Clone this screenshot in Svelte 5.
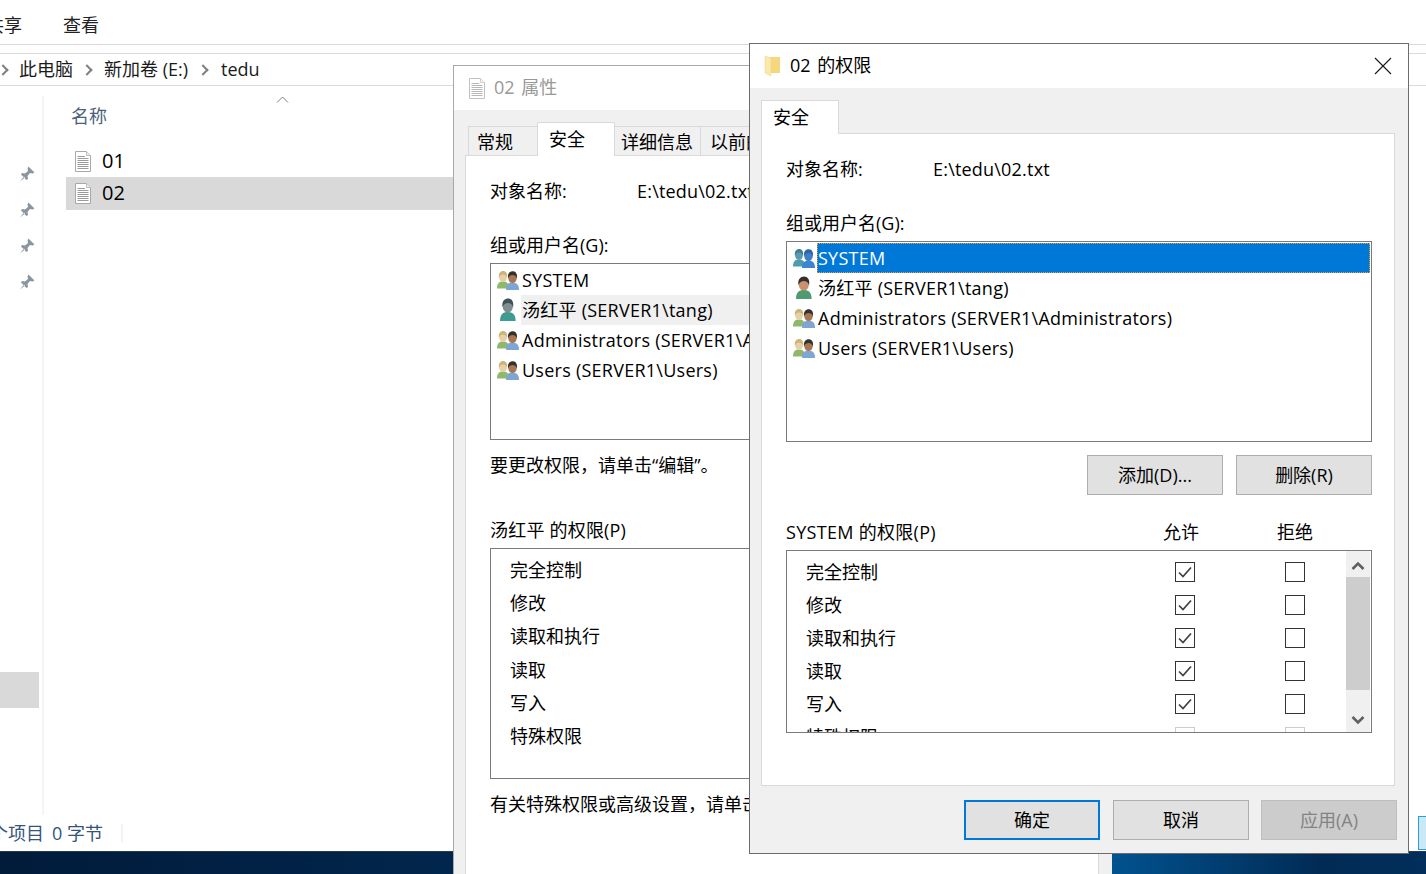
<script>
  const perms = ['完全控制', '修改', '读取和执行', '读取', '写入', '特殊权限'];
  const backUsers = [
    { name: 'SYSTEM', icon: 'group' },
    { name: '汤红平 (SERVER1\\tang)', icon: 'faded', hover: true },
    { name: 'Administrators (SERVER1\\Administrators)', icon: 'group' },
    { name: 'Users (SERVER1\\Users)', icon: 'group' }
  ];
  const frontUsers = [
    { name: 'SYSTEM', icon: 'system', selected: true },
    { name: '汤红平 (SERVER1\\tang)', icon: 'user' },
    { name: 'Administrators (SERVER1\\Administrators)', icon: 'group' },
    { name: 'Users (SERVER1\\Users)', icon: 'group' }
  ];
  const pins = [1, 2, 3, 4];
</script>

{#snippet doc(cls)}
  <svg class={cls} width="18" height="23" viewBox="0 0 18 23">
    <path d="M1.5 1.5H12.5L16.5 5.5V21.5H1.5Z" fill="#fff" stroke="#a8a8a8" />
    <path d="M12.5 1.5V5.5H16.5" fill="#f0f0f0" stroke="#bdbdbd" />
    <path d="M3.5 6.5H11M3.5 8.5H14.5M3.5 10.5H14.5M3.5 12.5H14.5M3.5 14.5H14.5M3.5 16.5H14.5M3.5 18.5H14.5" stroke="#9a9a9a" />
  </svg>
{/snippet}

{#snippet person(x, y, scale, hair, skin, shirt)}
  <g transform="translate({x} {y}) scale({scale})">
    <path d="M0 20C0 14.500 2.500 12.500 6.500 12.500S13 14.500 13 20Z" fill={shirt} />
    <ellipse cx="6.500" cy="7.500" rx="4.300" ry="5.500" fill={skin} />
    <path d="M2.100 8.500C1.300 3.500 3.800 1.200 6.700 1.200S11.700 3.500 10.900 8.500C10.200 5.800 8.400 5 6.500 5S2.900 5.800 2.100 8.500Z" fill={hair} />
  </g>
{/snippet}

{#snippet usericon(kind)}
  <svg class="uicon" width="22" height="20" viewBox="0 0 22 20">
    {#if kind === 'group'}
      {@render person(0, 0, 0.92, '#c9b578', '#e8cfa8', '#8fb86c')}
      {@render person(9, 0, 1, '#33302e', '#a87650', '#7ea6d2')}
    {:else if kind === 'system'}
      {@render person(0, 0, 0.92, '#3d7f96', '#5b9bb0', '#4f9bb0')}
      {@render person(9, 0, 1, '#2a66a8', '#3f80c4', '#3d85cf')}
    {:else if kind === 'faded'}
      {@render person(3, -3, 1.2, '#42505a', '#7f8f92', '#3f9a90')}
    {:else}
      {@render person(3, -3, 1.2, '#35302c', '#c8926e', '#4f9a70')}
    {/if}
  </svg>
{/snippet}

{#snippet check(on, faint)}
  <span class="cb" class:faint>
    {#if on}
      <svg width="18" height="18" viewBox="0 0 18 18"><path d="M3 9.500L7 13.500L15 4.500" fill="none" stroke="#404040" stroke-width="1.700" /></svg>
    {/if}
  </span>
{/snippet}

{#snippet userlist(users)}
  <div class="userlist">
    {#each users as u}
      <div class="urow">
        {@render usericon(u.icon)}
        <span class="uname" class:selected={u.selected} class:hover={u.hover}>{u.name}</span>
      </div>
    {/each}
  </div>
{/snippet}

<div class="screen">
  <div class="ribbon">
    <span class="rtab shared">共享</span>
    <span class="rtab">查看</span>
  </div>

  <div class="addr">
    <span class="crumb-arrow first"></span>
    <span class="crumb">此电脑</span>
    <span class="crumb-arrow"></span>
    <span class="crumb">新加卷 (E:)</span>
    <span class="crumb-arrow last"></span>
    <span class="crumb">tedu</span>
  </div>

  <div class="content">
    <aside class="side">
      {#each pins as p}
        <div class="pin">
          <svg width="18" height="18" viewBox="0 0 18 18">
            <path d="M10.500 1.500L16.500 7.500L14.500 8.500L12 8L9.500 11L10 14L8.500 15L3 9.500L4 8L7 8.500L10 6L9.500 3.500ZM6 11.500L2 16.500L7 12.500Z" fill="#8b95a0" />
          </svg>
        </div>
      {/each}
      <div class="side-sel"></div>
    </aside>
    <main class="files">
      <div class="colhead">
        <span>名称</span>
        <svg class="sort" width="13" height="7" viewBox="0 0 13 7"><path d="M1 6.500L6.500 1L12 6.500" fill="none" stroke="#7f7f7f" /></svg>
      </div>
      <div class="file">{@render doc('ficon')}<span>01</span></div>
      <div class="file sel">{@render doc('ficon')}<span>02</span></div>
    </main>
  </div>

  <div class="status">
    <span class="scount">个项目</span>
    <span class="ssize">0 字节</span>
    <span class="ssep"></span>
  </div>

  <div class="desktop"></div>

  <!-- 属性窗口（后面） -->
  <section class="win back">
    <header class="titlebar">
      {@render doc('ticon')}
      <span class="ttext">02 属性</span>
    </header>
    <div class="winbody">
      <div class="tabs">
        <span class="tab t1">常规</span>
        <span class="tab active">安全</span>
        <span class="tab t3">详细信息</span>
        <span class="tab t4">以前的版本</span>
      </div>
      <div class="panel">
        <div class="objrow"><span class="objlabel">对象名称:</span><span class="objval">E:\tedu\02.txt</span></div>
        <div class="glabel">组或用户名(G):</div>
        <div class="box listbox backlist">{@render userlist(backUsers)}</div>
        <div class="hint">要更改权限，请单击“编辑”。</div>
        <div class="plabel">汤红平 的权限(P)</div>
        <div class="box permbox-back">
          {#each perms as p}
            <div class="bperm">{p}</div>
          {/each}
        </div>
        <div class="hint">有关特殊权限或高级设置，请单击“高级”。</div>
      </div>
    </div>
  </section>

  <!-- 权限窗口（前面） -->
  <section class="win front">
    <header class="titlebar">
      <svg class="folder" width="18" height="22" viewBox="0 0 18 22">
        <path d="M5 2H16V18H5Z" fill="#f5d77e" />
        <path d="M1 1L7 3V21L1 18Z" fill="#fbe9a9" stroke="#ecd089" stroke-width="0.500" />
      </svg>
      <span class="ttext">02 的权限</span>
      <svg class="close" width="18" height="18" viewBox="0 0 18 18"><path d="M1 1L17 17M17 1L1 17" stroke="#1a1a1a" stroke-width="1.100" /></svg>
    </header>
    <div class="winbody">
      <div class="tabs">
        <span class="tab active">安全</span>
      </div>
      <div class="panel">
        <div class="objrow"><span class="objlabel">对象名称:</span><span class="objval">E:\tedu\02.txt</span></div>
        <div class="glabel">组或用户名(G):</div>
        <div class="box listbox frontlist">{@render userlist(frontUsers)}</div>
        <div class="actions">
          <button class="btn">添加(D)...</button>
          <button class="btn">删除(R)</button>
        </div>
        <div class="permhead">
          <span class="pmtitle">SYSTEM 的权限(P)</span>
          <span class="hc">允许</span>
          <span class="hc">拒绝</span>
        </div>
        <div class="box permbox">
          <div class="permrows">
            {#each perms as p, i}
              <div class="prow">
                <span>{p}</span>
                {@render check(i < 5, i === 5)}
                {@render check(false, i === 5)}
              </div>
            {/each}
          </div>
          <div class="scroll">
            <div class="sbtn up">
              <svg width="14" height="10" viewBox="0 0 14 10"><path d="M1.500 8L7 2.500L12.500 8" fill="none" stroke="#606060" stroke-width="2.600" /></svg>
            </div>
            <div class="thumb"></div>
            <div class="strack"></div>
            <div class="sbtn down">
              <svg width="14" height="10" viewBox="0 0 14 10"><path d="M1.500 2L7 7.500L12.500 2" fill="none" stroke="#606060" stroke-width="2.600" /></svg>
            </div>
          </div>
        </div>
      </div>
      <div class="footer">
        <button class="btn primary">确定</button>
        <button class="btn">取消</button>
        <button class="btn disabled">应用(A)</button>
      </div>
    </div>
  </section>

  <div class="peek"></div>
</div>

<style>
  :global(body) {
    margin: 0;
    background: #fff;
  }

  .screen {
    position: relative;
    width: 1426px;
    height: 874px;
    overflow: hidden;
    display: flex;
    flex-direction: column;
    background: #fff;
    color: #000;
    font-family: 'Open Sans', 'Noto Sans CJK SC', sans-serif;
    font-size: 18px;
    line-height: 24px;
  }

  /* explorer */
  .ribbon {
    height: 45px;
    flex: none;
    box-sizing: border-box;
    border-bottom: 1px solid #dadada;
    display: flex;
    align-items: center;
    padding-top: 6px;
    color: #222;
  }

  .rtab.shared {
    margin-left: -14px;
    margin-right: 41px;
  }

  .addr {
    height: 33px;
    flex: none;
    margin-top: 8px;
    box-sizing: border-box;
    border-top: 1px solid #dadada;
    border-bottom: 1px solid #dadada;
    display: flex;
    align-items: center;
    color: #1a1a1a;
  }

  .crumb {
    margin-bottom: 2px;
  }

  .crumb-arrow {
    width: 6px;
    height: 6px;
    border-top: 2.500px solid #808080;
    border-right: 2.500px solid #808080;
    transform: rotate(45deg);
    margin: 0 13px 0 10px;
  }

  .crumb-arrow.first {
    margin-left: -1px;
    margin-right: 12px;
  }

  .crumb-arrow.last {
    margin: 0 14px 0 11px;
  }

  .content {
    flex: none;
    height: 729px;
    display: flex;
  }

  .side {
    width: 42px;
    flex: none;
    margin-top: 10px;
    padding-top: 60px;
    height: 659px;
    border-right: 2px solid #f5f5f5;
  }

  .pin {
    height: 36px;
    display: flex;
    align-items: center;
    justify-content: center;
    padding-left: 12px;
  }

  .side-sel {
    width: 39px;
    height: 36px;
    margin-top: 372px;
    background: #d9d9d9;
  }

  .files {
    width: 400px;
    flex: none;
    padding-left: 22px;
  }

  .colhead {
    position: relative;
    height: 59px;
    padding-left: 5px;
    padding-top: 18px;
    box-sizing: border-box;
    color: #4c607a;
  }

  .sort {
    position: absolute;
    left: 210px;
    top: 10px;
  }

  .file {
    height: 32px;
    display: flex;
    align-items: center;
    padding-left: 8px;
    font-size: 20px;
  }

  .file.sel {
    height: 33px;
    background: #d9d9d9;
  }

  .file.sel span {
    margin-bottom: 1px;
  }

  .ficon {
    margin-right: 10px;
  }

  .status {
    height: 36px;
    flex: none;
    display: flex;
    align-items: center;
    color: #33557d;
  }

  .scount {
    margin-left: -10px;
  }

  .ssize {
    margin-left: 8px;
  }

  .ssep {
    width: 2px;
    height: 18px;
    margin-left: 18px;
    background: #f3f3f3;
  }

  .desktop {
    flex: 1;
    border-top: 1px solid #2b3a4a;
    background: linear-gradient(90deg, #011b3a 0, #01264d 453px, #01264d 900px, #01528f 1112px, #012b55 1320px, #012e5a 1426px);
  }

  .peek {
    position: absolute;
    left: 1418px;
    top: 816px;
    width: 8px;
    height: 34px;
    box-sizing: border-box;
    border: 1px solid #26a0da;
    border-right: none;
    background: #cbe8f6;
  }

  /* windows */
  .win {
    position: absolute;
    z-index: 1;
    box-sizing: border-box;
    display: flex;
    flex-direction: column;
    background: #f0f0f0;
  }

  .front {
    left: 749px;
    top: 43px;
    width: 660px;
    height: 811px;
    border: 1px solid #6d6d6d;
  }

  .back {
    left: 453px;
    top: 65px;
    width: 659px;
    height: 820px;
    border-left: 1px solid #a9a9a9;
    border-top: 1px solid #a9a9a9;
  }

  .titlebar {
    height: 44px;
    flex: none;
    background: #fff;
    display: flex;
    align-items: center;
    word-spacing: 2px;
  }

  .back .titlebar {
    color: #999;
  }

  .ticon {
    margin-left: 14px;
    margin-right: 8px;
    opacity: 0.7;
  }

  .folder {
    margin-left: 14px;
    margin-right: 8px;
  }

  .ttext {
    flex: 1;
    margin-bottom: 2px;
  }

  .close {
    margin-right: 16px;
  }

  .winbody {
    padding: 12px 0 0 11px;
  }

  .tabs {
    height: 34px;
    display: flex;
    align-items: flex-end;
    position: relative;
    z-index: 1;
    margin-bottom: -1px;
  }

  .tab {
    box-sizing: border-box;
    height: 30px;
    border: 1px solid #d9d9d9;
    border-bottom: none;
    padding: 3px 8px 0;
    white-space: nowrap;
  }

  .tab.active {
    height: 34px;
    width: 78px;
    background: #fff;
    padding: 4px 11px 0;
    border-bottom: none;
  }

  .back .tabs {
    padding-left: 3px;
  }

  .tab.t1 {
    width: 69px;
    border-right: none;
    padding-left: 8px;
  }

  .tab.t3 {
    width: 86px;
    border-left: none;
    padding-left: 6px;
    border-right: 1px solid #d9d9d9;
  }

  .tab.t4 {
    border-left: none;
    padding-left: 9px;
  }

  .panel {
    box-sizing: border-box;
    background: #fff;
    border: 1px solid #d9d9d9;
    padding: 23px 0 0 24px;
  }

  .front .panel {
    width: 634px;
    height: 653px;
  }

  .back .panel {
    width: 634px;
    height: 740px;
  }

  .objrow {
    display: flex;
    height: 24px;
  }

  .objlabel {
    width: 147px;
    flex: none;
  }

  .objval {
    letter-spacing: 0.2px;
  }

  .glabel {
    margin-top: 30px;
    margin-bottom: 6px;
  }

  .box {
    box-sizing: border-box;
    border: 1px solid #7a7a7a;
    background: #fff;
    width: 586px;
    overflow: hidden;
  }

  .listbox {
    padding: 1px 1px 0 0;
  }

  .frontlist {
    height: 201px;
  }

  .backlist {
    height: 177px;
  }

  .urow {
    height: 30px;
    display: flex;
    align-items: center;
    padding-left: 6px;
    white-space: nowrap;
  }

  .uicon {
    flex: none;
    overflow: visible;
  }

  .uname {
    flex: 1;
    height: 30px;
    line-height: 30px;
    margin-left: 2px;
    padding-left: 1px;
    letter-spacing: 0.25px;
  }

  .uname.selected {
    background: #0078d7;
    color: #fff;
    outline: 1px dotted #f0a030;
    outline-offset: -1px;
  }

  .uname.hover {
    background: #f0f0f0;
  }

  .actions {
    display: flex;
    justify-content: flex-end;
    gap: 13px;
    width: 586px;
    margin-top: 13px;
  }

  .btn {
    width: 136px;
    height: 40px;
    box-sizing: border-box;
    border: 1px solid #adadad;
    background: #e1e1e1;
    font: inherit;
    color: #000;
    padding: 0;
  }

  .btn.primary {
    border: 2px solid #0078d7;
  }

  .btn.disabled {
    margin-left: -1px;
    background: #cccccc;
    border-color: #bfbfbf;
    color: #838383;
  }

  .permhead {
    display: grid;
    grid-template-columns: 1fr 114px 114px;
    width: 566px;
    margin-top: 25px;
    margin-bottom: 6px;
  }

  .pmtitle {
    letter-spacing: 0.3px;
  }

  .hc {
    text-align: center;
  }

  .permbox {
    height: 183px;
    display: flex;
  }

  .permrows {
    flex: 1;
    padding-top: 4px;
  }

  .prow {
    height: 33px;
    display: grid;
    grid-template-columns: 1fr 20px 20px;
    column-gap: 90px;
    align-items: center;
    padding: 0 41px 0 19px;
  }

  .cb {
    box-sizing: border-box;
    width: 20px;
    height: 20px;
    border: 1px solid #333;
    display: flex;
    align-items: center;
    justify-content: center;
  }

  .cb.faint {
    border-color: #ccc;
  }

  .scroll {
    width: 24px;
    margin-right: 1px;
    background: #f0f0f0;
    display: flex;
    flex-direction: column;
  }

  .sbtn {
    height: 26px;
    flex: none;
    display: flex;
    align-items: center;
    justify-content: center;
  }

  .sbtn.up {
    padding-top: 3px;
    box-sizing: border-box;
  }

  .sbtn.down {
    padding-top: 1px;
    box-sizing: border-box;
  }

  .thumb {
    height: 113px;
    flex: none;
    background: #cdcdcd;
  }

  .strack {
    flex: 1;
  }

  .footer {
    display: flex;
    justify-content: flex-end;
    gap: 13px;
    margin-top: 14px;
    padding-right: 11px;
  }

  .hint {
    margin-top: 13px;
  }

  .plabel {
    margin-top: 41px;
    margin-bottom: 6px;
    letter-spacing: 0.2px;
  }

  .permbox-back {
    height: 231px;
    padding: 5px 0 0 19px;
  }

  .bperm {
    height: 33.200px;
    line-height: 33px;
  }
</style>
